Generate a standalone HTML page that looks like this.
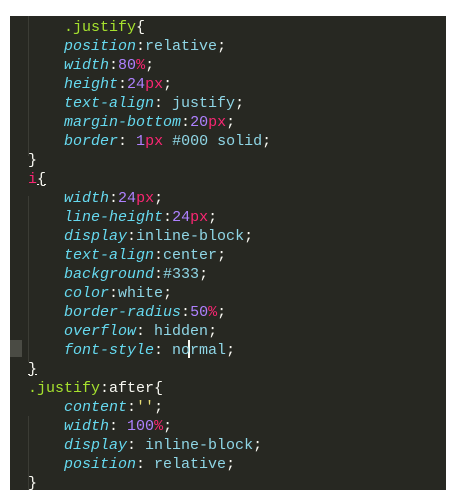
<!DOCTYPE html>
<html><head><style>
body{margin:0;width:457px;height:499px;background:#fff;overflow:hidden;position:relative}
#p{position:absolute;left:10px;top:16px;width:436px;height:474px;background:#272822;overflow:hidden}
pre{margin:0;position:absolute;left:18px;top:2px;font:15px/19px "Liberation Mono",monospace;color:#f8f8f2}
.k{color:#66d9ef;font-style:italic}
.n{color:#ae81ff}.u{color:#f92672}.s{color:#a6e22e}.v{color:#8fd6e6}.w{color:#f8f8f2}
.g{position:absolute;left:18px;width:1px;background:#3b3c35}
</style></head><body>
<div id="p">
<div class="g" style="top:0;height:140px"></div>
<div class="g" style="top:180px;height:166px"></div>
<div class="g" style="top:400px;height:74px"></div>
<div style="position:absolute;left:0;top:324px;width:12px;height:17px;background:#4a4b44"></div>
<div style="position:absolute;left:178px;top:324px;width:2px;height:18px;background:#f8f8f0"></div>
<pre>    <span class="s">.justify</span>{
    <span class="k">position</span>:<span class="v">relative</span>;
    <span class="k">width</span>:<span class="n">80</span><span class="u">%</span>;
    <span class="k">height</span>:<span class="n">24</span><span class="u">px</span>;
    <span class="k">text-align</span>: <span class="v">justify</span>;
    <span class="k">margin-bottom</span>:<span class="n">20</span><span class="u">px</span>;
    <span class="k">border</span>: <span class="n">1</span><span class="u">px</span> <span class="v">#000</span> <span class="v">solid</span>;
}
<span class="u">i</span><u>{</u>
    <span class="k">width</span>:<span class="n">24</span><span class="u">px</span>;
    <span class="k">line-height</span>:<span class="n">24</span><span class="u">px</span>;
    <span class="k">display</span>:<span class="v">inline-block</span>;
    <span class="k">text-align</span>:<span class="v">center</span>;
    <span class="k">background</span>:<span class="v">#333</span>;
    <span class="k">color</span>:<span class="v">white</span>;
    <span class="k">border-radius</span>:<span class="n">50</span><span class="u">%</span>;
    <span class="k">overflow</span>: <span class="v">hidden</span>;
    <span class="k">font-style</span>: <span class="v">normal</span>;
<u>}</u>
<span class="s">.justify</span>:after{
    <span class="k">content</span>:<span style="color:#e6db74">''</span>;
    <span class="k">width</span>: <span class="n">100</span><span class="u">%</span>;
    <span class="k">display</span>: <span class="v">inline-block</span>;
    <span class="k">position</span>: <span class="v">relative</span>;
}</pre>
</div>
</body></html>
